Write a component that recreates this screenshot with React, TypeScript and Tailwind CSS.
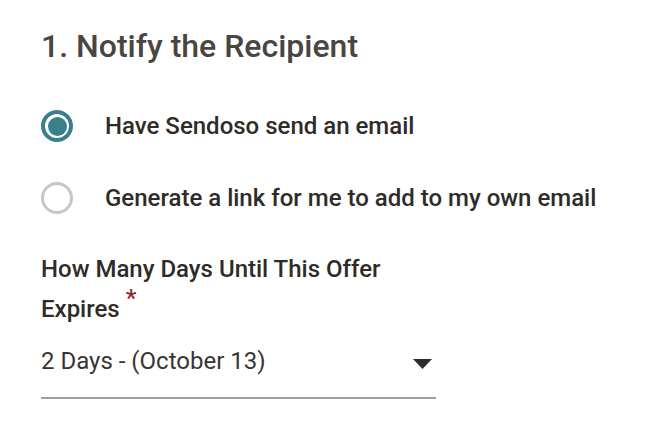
export default function App() {
  return (
    <div className="min-h-[442px] w-[646px] bg-white pl-[41px] pt-[26px] font-['Roboto',sans-serif]">
      <h2 className="text-[32px] font-medium leading-[40px] text-[#4a4541]">1. Notify the Recipient</h2>

      <div className="mt-[44px] flex flex-col gap-[40px]">
        <label className="flex h-[32px] items-center gap-[32px]">
          <span className="flex size-[32px] items-center justify-center rounded-full border-4 border-[#3a7f8c]">
            <span className="size-[19px] rounded-full bg-[#3a7f8c]" />
          </span>
          <span className="text-[24px] font-medium text-[#2f2b28]">Have Sendoso send an email</span>
        </label>
        <label className="flex h-[32px] items-center gap-[32px]">
          <span className="size-[32px] rounded-full border-[3px] border-[#c6c6c6]" />
          <span className="text-[24px] font-medium text-[#2f2b28]">Generate a link for me to add to my own email</span>
        </label>
      </div>

      <div className="mt-[35px] w-[395px]">
        <p className="text-[24px] font-medium leading-[40px] text-[#2f2b28]">
          <span>How Many Days Until This Offer</span> <span>Expires</span>
          <span className="relative -top-[11px] ml-[6px] inline-block text-[24px] leading-[12px] text-[#8c2a2a]">*</span>
        </p>
        <div className="mt-[18px] flex items-start justify-between border-b-2 border-[#a19d99] pb-[22px]">
          <span className="text-[24px] leading-[28px] text-[#3a3532]">2 Days - (October 13)</span>
          <svg width="19" height="10" viewBox="0 0 19 10" className="mr-[4px] mt-[12px]">
            <path d="M0 0 L19 0 L9.5 10 Z" fill="#2f2b28" />
          </svg>
        </div>
      </div>
    </div>
  );
}
